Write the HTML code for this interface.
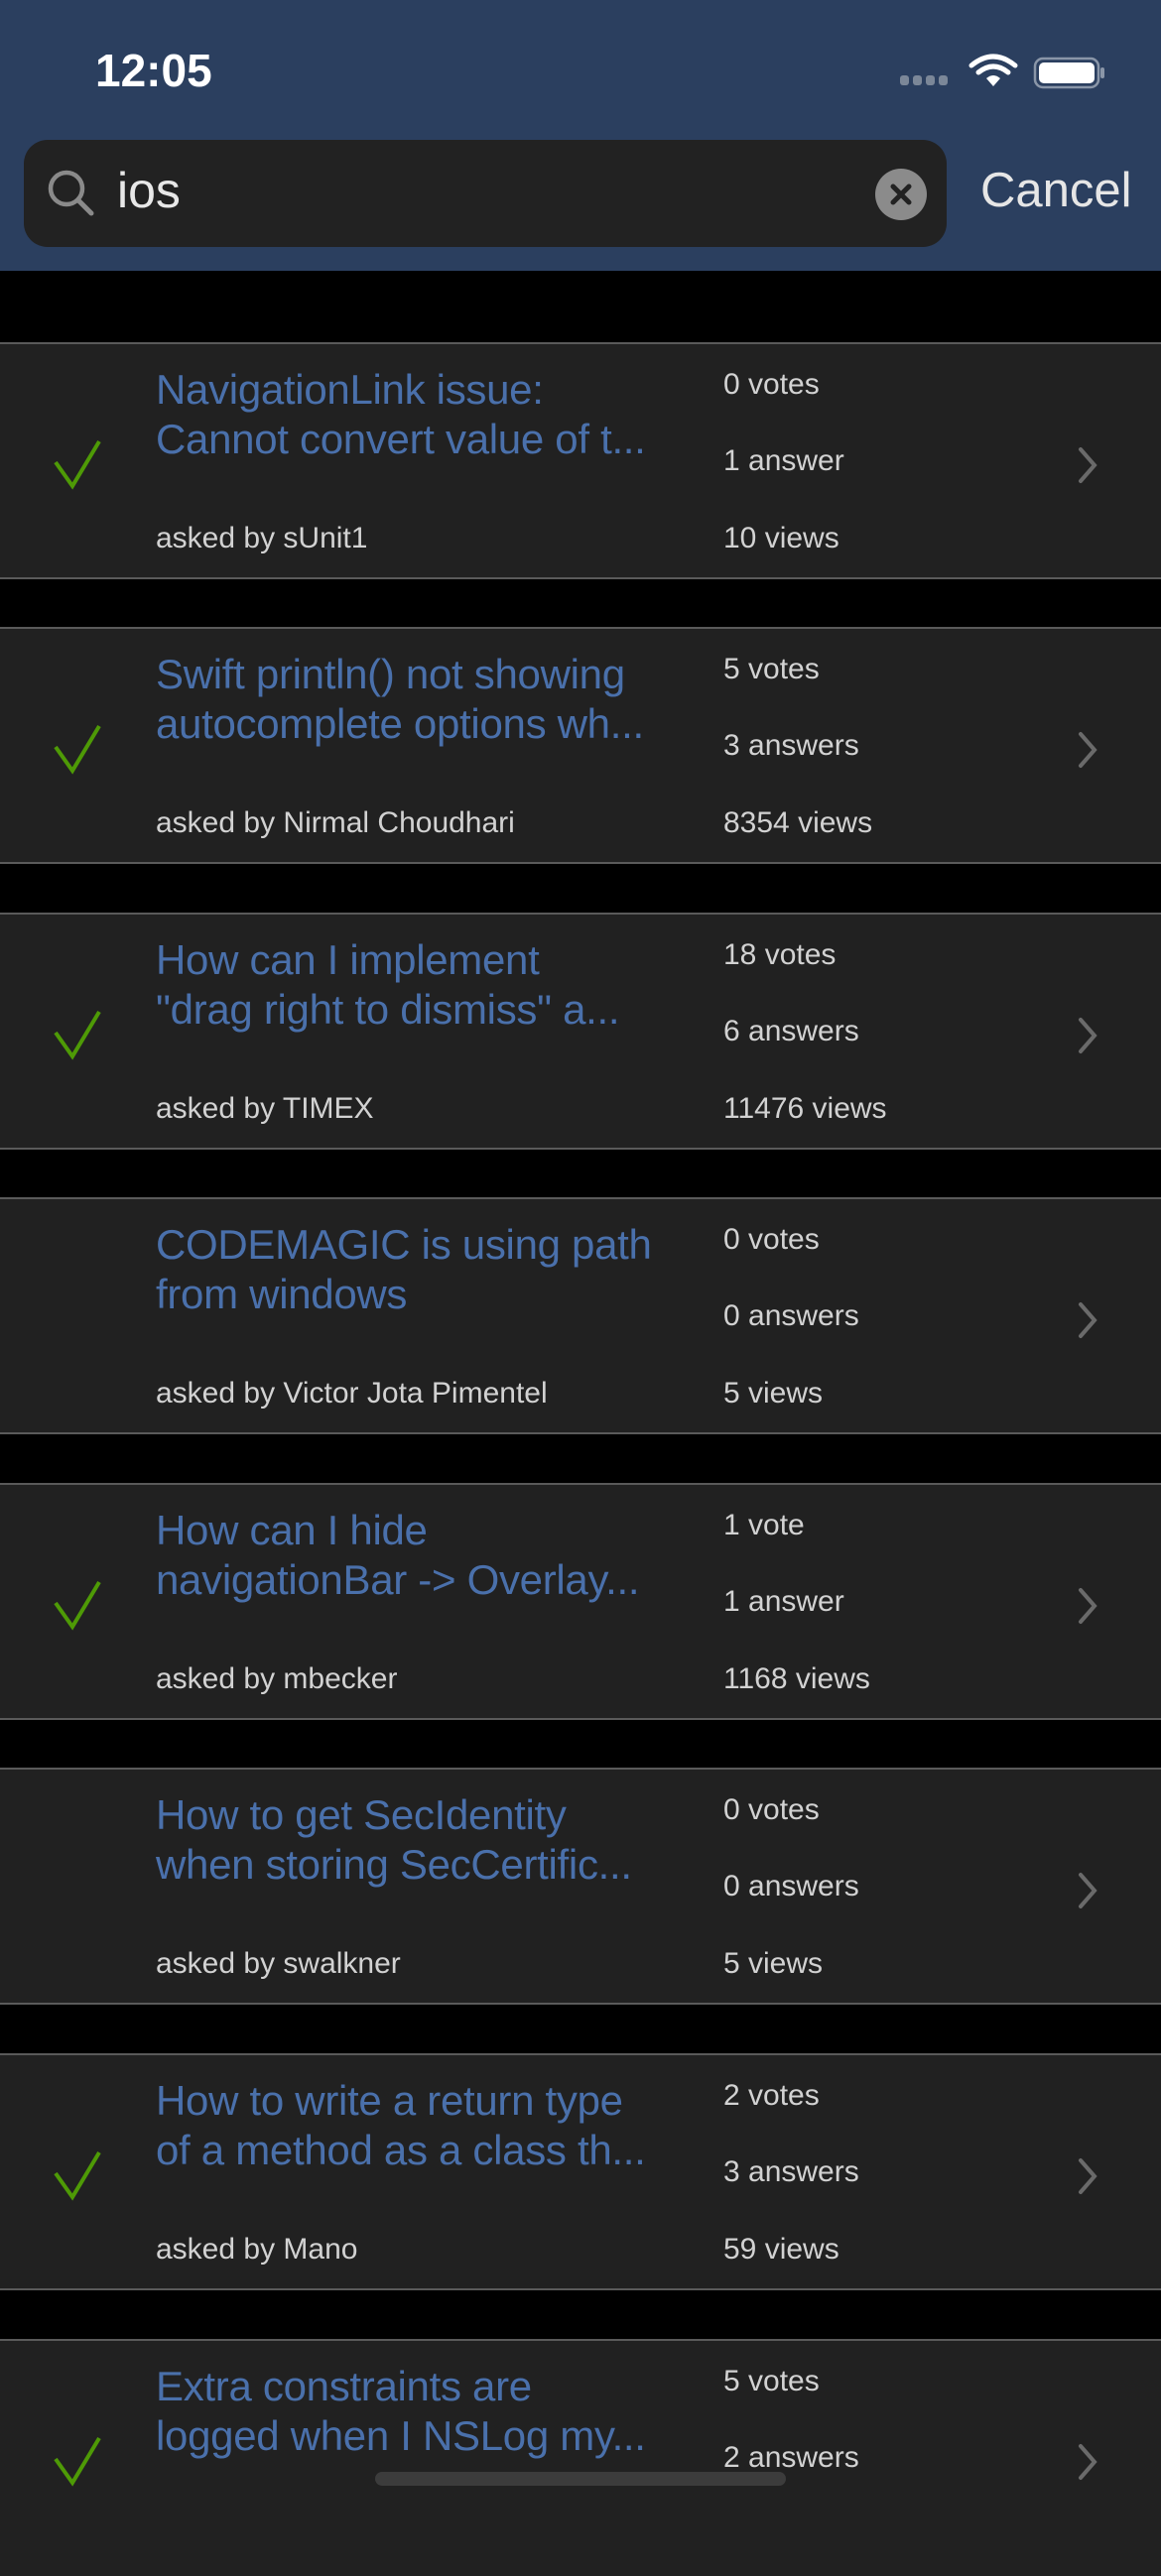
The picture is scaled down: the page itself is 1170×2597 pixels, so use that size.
<!DOCTYPE html>
<html><head><meta charset="utf-8"><style>
*{margin:0;padding:0;box-sizing:border-box}
body{width:1170px;height:2532px;background:#000;position:relative;overflow:hidden;font-family:"Liberation Sans",sans-serif}
.hdr{position:absolute;left:0;top:0;width:1170px;height:273px;background:#2b3f5f}
.time{position:absolute;left:96px;top:44px;color:#fff;font-size:46px;font-weight:bold}
.search{position:absolute;left:24px;top:141px;width:930px;height:108px;background:#222;border-radius:24px}
.q{position:absolute;left:94px;top:22px;color:#e8e8e8;font-size:50px}
.cancel{position:absolute;left:988px;top:164px;color:#e6e6e6;font-size:49px}
.row{position:absolute;left:0;width:1170px;height:239px;background:#212121;border-top:2px solid #5a5a5a;border-bottom:2px solid #5a5a5a}
.t{position:absolute;left:157px;color:#4a70ab;font-size:42px;white-space:nowrap;letter-spacing:-0.3px}
.s{position:absolute;left:729px;color:#d2d2d2;font-size:30px}
.a{position:absolute;left:157px;color:#d2d2d2;font-size:30px}
.chk{position:absolute;left:52px;top:96px}
.chev{position:absolute;left:1084px;top:102px}
.home{position:absolute;left:378px;top:2492px;width:414px;height:14px;border-radius:7px;background:#3c3c3c}
</style></head><body>
<div class="hdr">
<div class="time">12:05</div>
<svg style="position:absolute;left:905px;top:52px" width="215" height="40" viewBox="0 0 215 40">
<g fill="#7b8798"><rect x="2" y="24" width="9" height="10" rx="3"/><rect x="15" y="24" width="9" height="10" rx="3"/><rect x="28" y="24" width="9" height="10" rx="3"/><rect x="41" y="24" width="9" height="10" rx="3"/></g>
<g fill="none" stroke="#fff" stroke-width="5" stroke-linecap="round"><path d="M74 14 Q96 -4 118 14"/><path d="M81 21 Q96 9 111 21"/></g>
<path d="M89 27 Q96 21 103 27 L96 35 Z" fill="#fff"/>
<rect x="138" y="7" width="64" height="29" rx="8" fill="none" stroke="#8a96a8" stroke-width="2.5"/>
<rect x="142" y="11" width="56" height="21" rx="5" fill="#fff"/>
<rect x="204" y="16" width="4" height="11" rx="2" fill="#8a96a8"/>
</svg>
<div class="search">
<svg style="position:absolute;left:22px;top:28px" width="52" height="52" viewBox="0 0 52 52"><circle cx="21" cy="21" r="16" fill="none" stroke="#8a8a8a" stroke-width="4.5"/><path d="M33 33 L46 46" stroke="#8a8a8a" stroke-width="5" stroke-linecap="round"/></svg>
<div class="q">ios</div>
<svg style="position:absolute;left:858px;top:29px" width="52" height="52" viewBox="0 0 52 52"><circle cx="26" cy="26" r="26" fill="#8b8b8b"/><path d="M18 18 L34 34 M34 18 L18 34" stroke="#222" stroke-width="5" stroke-linecap="round"/></svg>
</div>
<div class="cancel">Cancel</div>
</div>

<div class="row" style="top:345px">
<svg class="chk" width="56" height="52" viewBox="0 0 56 52"><path d="M4 23 L21 47 L48 2" fill="none" stroke="#4e9a06" stroke-width="4"/></svg>
<div class="t" style="top:22px">NavigationLink issue:</div><div class="t" style="top:72px">Cannot convert value of t...</div>
<div class="a" style="top:179px">asked by sUnit1</div>
<div class="s" style="top:24px">0 votes</div><div class="s" style="top:101px">1 answer</div><div class="s" style="top:179px">10 views</div>
<svg class="chev" width="24" height="40" viewBox="0 0 24 40"><path d="M5 4 L19 20 L5 36" fill="none" stroke="#6a6a6a" stroke-width="4" stroke-linecap="round"/></svg>
</div>

<div class="row" style="top:632px">
<svg class="chk" width="56" height="52" viewBox="0 0 56 52"><path d="M4 23 L21 47 L48 2" fill="none" stroke="#4e9a06" stroke-width="4"/></svg>
<div class="t" style="top:22px">Swift println() not showing</div><div class="t" style="top:72px">autocomplete options wh...</div>
<div class="a" style="top:179px">asked by Nirmal Choudhari</div>
<div class="s" style="top:24px">5 votes</div><div class="s" style="top:101px">3 answers</div><div class="s" style="top:179px">8354 views</div>
<svg class="chev" width="24" height="40" viewBox="0 0 24 40"><path d="M5 4 L19 20 L5 36" fill="none" stroke="#6a6a6a" stroke-width="4" stroke-linecap="round"/></svg>
</div>

<div class="row" style="top:920px">
<svg class="chk" width="56" height="52" viewBox="0 0 56 52"><path d="M4 23 L21 47 L48 2" fill="none" stroke="#4e9a06" stroke-width="4"/></svg>
<div class="t" style="top:22px">How can I implement</div><div class="t" style="top:72px">"drag right to dismiss" a...</div>
<div class="a" style="top:179px">asked by TIMEX</div>
<div class="s" style="top:24px">18 votes</div><div class="s" style="top:101px">6 answers</div><div class="s" style="top:179px">11476 views</div>
<svg class="chev" width="24" height="40" viewBox="0 0 24 40"><path d="M5 4 L19 20 L5 36" fill="none" stroke="#6a6a6a" stroke-width="4" stroke-linecap="round"/></svg>
</div>

<div class="row" style="top:1207px">
<div class="t" style="top:22px">CODEMAGIC is using path</div><div class="t" style="top:72px">from windows</div>
<div class="a" style="top:179px">asked by Victor Jota Pimentel</div>
<div class="s" style="top:24px">0 votes</div><div class="s" style="top:101px">0 answers</div><div class="s" style="top:179px">5 views</div>
<svg class="chev" width="24" height="40" viewBox="0 0 24 40"><path d="M5 4 L19 20 L5 36" fill="none" stroke="#6a6a6a" stroke-width="4" stroke-linecap="round"/></svg>
</div>

<div class="row" style="top:1495px">
<svg class="chk" width="56" height="52" viewBox="0 0 56 52"><path d="M4 23 L21 47 L48 2" fill="none" stroke="#4e9a06" stroke-width="4"/></svg>
<div class="t" style="top:22px">How can I hide</div><div class="t" style="top:72px">navigationBar -&gt; Overlay...</div>
<div class="a" style="top:179px">asked by mbecker</div>
<div class="s" style="top:24px">1 vote</div><div class="s" style="top:101px">1 answer</div><div class="s" style="top:179px">1168 views</div>
<svg class="chev" width="24" height="40" viewBox="0 0 24 40"><path d="M5 4 L19 20 L5 36" fill="none" stroke="#6a6a6a" stroke-width="4" stroke-linecap="round"/></svg>
</div>

<div class="row" style="top:1782px">
<div class="t" style="top:22px">How to get SecIdentity</div><div class="t" style="top:72px">when storing SecCertific...</div>
<div class="a" style="top:179px">asked by swalkner</div>
<div class="s" style="top:24px">0 votes</div><div class="s" style="top:101px">0 answers</div><div class="s" style="top:179px">5 views</div>
<svg class="chev" width="24" height="40" viewBox="0 0 24 40"><path d="M5 4 L19 20 L5 36" fill="none" stroke="#6a6a6a" stroke-width="4" stroke-linecap="round"/></svg>
</div>

<div class="row" style="top:2070px">
<svg class="chk" width="56" height="52" viewBox="0 0 56 52"><path d="M4 23 L21 47 L48 2" fill="none" stroke="#4e9a06" stroke-width="4"/></svg>
<div class="t" style="top:22px">How to write a return type</div><div class="t" style="top:72px">of a method as a class th...</div>
<div class="a" style="top:179px">asked by Mano</div>
<div class="s" style="top:24px">2 votes</div><div class="s" style="top:101px">3 answers</div><div class="s" style="top:179px">59 views</div>
<svg class="chev" width="24" height="40" viewBox="0 0 24 40"><path d="M5 4 L19 20 L5 36" fill="none" stroke="#6a6a6a" stroke-width="4" stroke-linecap="round"/></svg>
</div>

<div class="row" style="top:2358px;border-bottom:none">
<svg class="chk" width="56" height="52" viewBox="0 0 56 52"><path d="M4 23 L21 47 L48 2" fill="none" stroke="#4e9a06" stroke-width="4"/></svg>
<div class="t" style="top:22px">Extra constraints are</div><div class="t" style="top:72px">logged when I NSLog my...</div>
<div class="s" style="top:24px">5 votes</div><div class="s" style="top:101px">2 answers</div>
<svg class="chev" width="24" height="40" viewBox="0 0 24 40"><path d="M5 4 L19 20 L5 36" fill="none" stroke="#6a6a6a" stroke-width="4" stroke-linecap="round"/></svg>
</div>

<div class="home"></div>
</body></html>
